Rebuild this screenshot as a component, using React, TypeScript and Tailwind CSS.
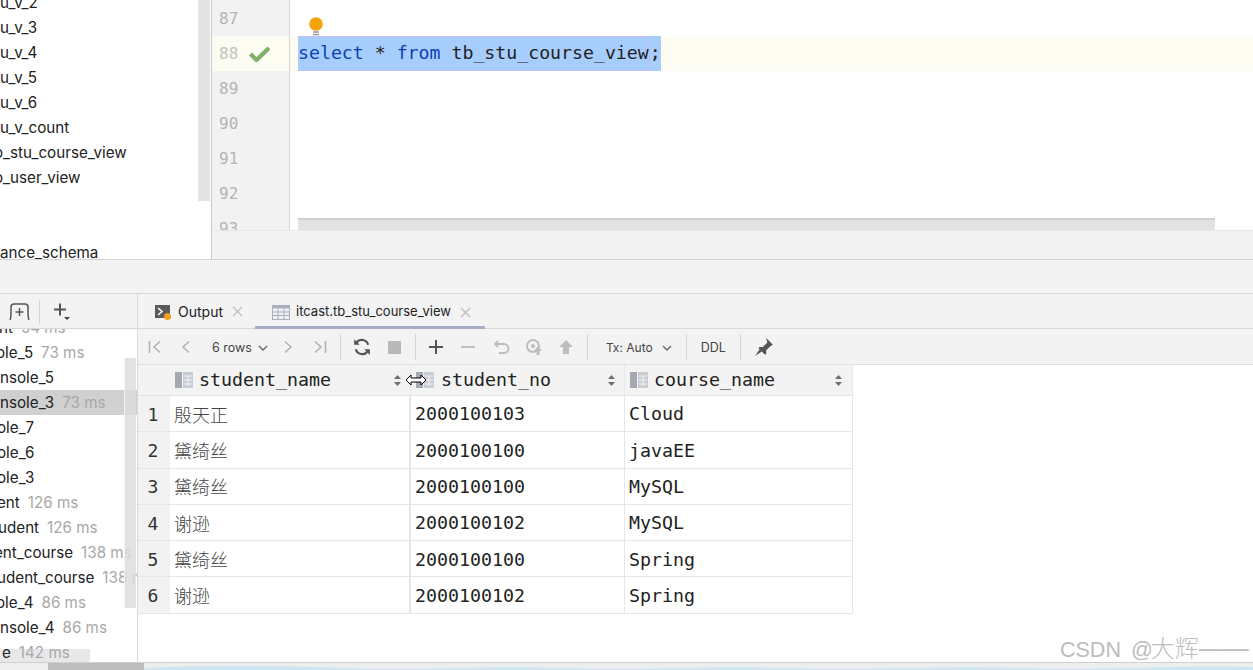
import React from "react";

const mono = "font-['DejaVu_Sans_Mono',monospace]";
const sans = "font-['Inter','Noto_Sans',sans-serif]";

const ColIcon = () => (
  <svg width="18" height="16" viewBox="0 0 18 16" className="shrink-0">
    <rect x="0" y="0" width="7" height="16" fill="#a4a8b0" />
    <rect x="8" y="0" width="10" height="16" fill="#c9ccd2" />
    <path d="M9 4h8M9 8h8M9 12h8M13 4v10" stroke="#f3f3f3" strokeWidth="1" />
  </svg>
);

const Sort = () => (
  <svg width="7" height="11" viewBox="0 0 7 11" className="shrink-0">
    <path d="M3.5 0L7 4H0zM3.5 11L0 7h7z" fill="#6e6e6e" />
  </svg>
);

const gutter = [
  { n: 87, h: "h-[36px] pt-[2px]" },
  { n: 88, h: "h-[35px]", active: true },
  { n: 89, h: "h-[35px]" },
  { n: 90, h: "h-[35px]" },
  { n: 91, h: "h-[35px]" },
  { n: 92, h: "h-[35px]" },
  { n: 93, h: "h-[35px]" },
];

const treeTop: [string, string][] = [
  ["u_v_2", ""],
  ["u_v_3", ""],
  ["u_v_4", ""],
  ["u_v_5", ""],
  ["u_v_6", ""],
  ["u_v_count", ""],
  ["o_stu_course_view", "-ml-[6px]"],
  ["o_user_view", "-ml-[6px]"],
  ["", ""],
  ["", ""],
  ["ance_schema", ""],
];

const services: [string, string, string, string][] = [
  ["nt", "54 ms", "-ml-[1px]", "w-[125px]"],
  ["ole_5", "73 ms", "-ml-[4px]", "w-[125px]"],
  ["nsole_5", "", "", "w-[125px]"],
  ["nsole_3", "73 ms", "", "w-[137px] bg-[#d0d0d0]"],
  ["ole_7", "", "-ml-[3px]", "w-[125px]"],
  ["ole_6", "", "-ml-[3px]", "w-[125px]"],
  ["ole_3", "", "-ml-[3px]", "w-[125px]"],
  ["ent", "126 ms", "-ml-[3px]", "w-[125px]"],
  ["udent", "126 ms", "-ml-[2px]", "w-[125px]"],
  ["ent_course", "138 ms", "-ml-[6px]", "w-[125px]"],
  ["udent_course", "138 ms", "-ml-[3px]", "w-[137px]"],
  ["ole_4", "86 ms", "-ml-[4px]", "w-[125px]"],
  ["nsole_4", "86 ms", "", "w-[125px]"],
  ["e", "142 ms", "ml-[2px]", "w-[90px] bg-[linear-gradient(to_bottom,transparent_9px,#e8e8e8_9px)]"],
];

const rows = [
  ["殷天正", "2000100103", "Cloud"],
  ["黛绮丝", "2000100100", "javaEE"],
  ["黛绮丝", "2000100100", "MySQL"],
  ["谢逊", "2000100102", "MySQL"],
  ["黛绮丝", "2000100100", "Spring"],
  ["谢逊", "2000100102", "Spring"],
];

const Sep = () => <div className="w-px h-[26px] bg-[#d4d4d4] shrink-0" />;

export default function App() {
  return (
    <div className={`relative w-[1253px] h-[670px] overflow-hidden flex flex-col bg-white ${sans} text-[#222]`}>
      {/* top pane */}
      <div className="h-[260px] shrink-0 flex border-b border-[#d4d4d4]">
        <div className="w-[211px] shrink-0 flex overflow-hidden">
          <div className="flex-1 -mt-[10px] text-[15.2px] leading-[25px] whitespace-nowrap overflow-hidden">
            {treeTop.map(([t, m], i) => (
              <div key={i} className={`h-[25px] ${m}`}>{t}</div>
            ))}
          </div>
          <div className="w-[12px] h-[201px] bg-[#e4e4e4] mr-px shrink-0" />
        </div>
        <div className="w-px bg-[#c8c8c8] shrink-0" />
        <div className="flex-1 flex flex-col min-w-0">
          <div className="flex-1 flex min-h-0 overflow-hidden relative">
            <div className="w-[78px] shrink-0 bg-[#f2f2f3] border-r border-[#d6d6d6] overflow-hidden">
              {gutter.map((g) => (
                <div key={g.n} className={`${g.h} flex items-center pl-[7px] gap-[11px] ${g.active ? "bg-[#fdfcf3] text-[#c4c4bc]" : "text-[#b4b4b4]"} ${mono} text-[16px]`}>
                  <span>{g.n}</span>
                  {g.active && (
                    <svg width="21" height="16" viewBox="0 0 21 16">
                      <path d="M1.5 8l6 6L20 2" fill="none" stroke="#7fb069" strokeWidth="4.2" />
                    </svg>
                  )}
                </div>
              ))}
            </div>
            <div className="flex-1 min-w-0 flex flex-col">
              <div className="h-[36px] shrink-0 pl-[17px] flex items-end">
                <svg width="18" height="20" viewBox="0 0 18 20">
                  <circle cx="9" cy="8" r="6.8" fill="#f5a30a" />
                  <path d="M6 16h6M6 18.5h6" stroke="#9a9a9a" strokeWidth="1.4" />
                </svg>
              </div>
              <div className="h-[35px] shrink-0 bg-[#fdfcf3] pl-[8px]">
                <div className={`inline-block h-[35px] leading-[32px] bg-[#a6cdfb] ${mono} text-[18.22px] whitespace-nowrap`}>
                  <span className="inline-block h-[35px] border border-[#c6bdf2] border-l-0 box-border">
                    <span className="text-[#0a3fb8]">select</span>
                    <span> * </span>
                    <span className="text-[#0a3fb8]">from</span>
                    <span> tb_stu_course_view</span>
                  </span>
                  <span>;</span>
                </div>
              </div>
              <div className="flex-1" />
              <div className="h-[12px] shrink-0 ml-[8px] mr-[38px] bg-[#e2e2e2] border-t-2 border-[#d0d0d0]" />
            </div>
          </div>
          <div className="h-[29px] shrink-0 bg-[#f2f2f2] border-t border-[#e8e8e8]" />
        </div>
      </div>
      {/* band */}
      <div className="h-[33px] shrink-0 bg-[#f3f3f3]" />
      {/* bottom pane */}
      <div className="flex-1 min-h-0 flex border-t border-[#d8d8d8]">
        {/* left services */}
        <div className="w-[138px] shrink-0 flex flex-col border-r border-[#d8d8d8] overflow-hidden">
          <div className="h-[35px] shrink-0 bg-[#f3f3f3] border-b border-[#d8d8d8] flex items-center pl-[9px] pt-[2px]">
            <svg width="21" height="18" viewBox="0 0 21 18" className="shrink-0">
              <path d="M1 17c1-2 1-3 1-8V4c0-2 1-3 3-3h11c2 0 3 1 3 3v5c0 5 0 6 1 8M10.5 5v8M6.5 9h8" fill="none" stroke="#555" strokeWidth="1.5" />
            </svg>
            <div className="w-px h-[24px] bg-[#d4d4d4] ml-[9px]" />
            <svg width="18" height="18" viewBox="0 0 18 18" className="ml-[13px] shrink-0">
              <path d="M1 6.5h12M7 0.5v12" stroke="#555" strokeWidth="2" />
              <path d="M11 14h6l-3 3z" fill="#444" />
            </svg>
          </div>
          <div className="flex-1 min-h-0 overflow-hidden relative">
            <div className="-mt-[14px] text-[15.2px] whitespace-nowrap">
              {services.map(([a, b, m, w], i) => (
                <div key={i} className={`h-[25px] leading-[25px] ${w}`}>
                  <div className={m}>
                    {a}
                    {b && <span className="text-[#a8a8a8] ml-[8px]">{b}</span>}
                  </div>
                </div>
              ))}
            </div>
            <div className="absolute right-[1px] top-[29px] w-[12px] h-[250px] bg-[#dcdcdc]/80 border-l border-[#f4f4f4]" />
          </div>
        </div>
        {/* right */}
        <div className="flex-1 min-w-0 flex flex-col">
          <div className="h-[35px] shrink-0 bg-[#f3f3f3] border-b border-[#d8d8d8] flex text-[13px]">
            <div className="w-[117px] shrink-0 flex items-center pl-[17px] gap-[7px] pt-[1px]">
              <svg width="16" height="16" viewBox="0 0 16 16" className="shrink-0">
                <rect x="0" y="1" width="15" height="13" fill="#5a5a5a" />
                <path d="M3 4l4 3.5L3 11" fill="none" stroke="#fff" strokeWidth="1.6" />
                <circle cx="12.5" cy="12.5" r="3.5" fill="#f0a020" />
              </svg>
              <span className="text-[14px]">Output</span>
              <svg width="11" height="11" viewBox="0 0 11 11" className="ml-[2px]">
                <path d="M1 1l9 9M10 1l-9 9" stroke="#bdbdbd" strokeWidth="1.2" />
              </svg>
            </div>
            <div className="w-[230px] shrink-0 flex items-center pl-[17px] gap-[6px] border-b-[3px] border-[#a8adc4] -mb-px pt-[4px]">
              <svg width="18" height="15" viewBox="0 0 18 15" className="shrink-0">
                <rect x="0.5" y="0.5" width="17" height="14" fill="#f0f1f4" stroke="#a9afbd" />
                <rect x="0.5" y="0.5" width="17" height="3" fill="#a9afbd" />
                <path d="M1 7h16M1 10.5h16M6 4v10M12 4v10" stroke="#a9afbd" />
              </svg>
              <span className="whitespace-nowrap">itcast.tb_stu_course_view</span>
              <svg width="11" height="11" viewBox="0 0 11 11" className="ml-[3px] shrink-0">
                <path d="M1 1l9 9M10 1l-9 9" stroke="#bdbdbd" strokeWidth="1.2" />
              </svg>
            </div>
          </div>
          <div className="h-[36px] shrink-0 bg-[#f3f3f3] border-b border-[#dedede] flex items-center text-[12px] text-[#444] pl-[10px] pt-[1px]">
            <svg width="14" height="14" viewBox="0 0 14 14" className="shrink-0"><path d="M1.5 1v12M12 1.5L6 7l6 5.5" fill="none" stroke="#b0b0b0" strokeWidth="1.5" /></svg>
            <svg width="10" height="14" viewBox="0 0 10 14" className="ml-[19px] shrink-0"><path d="M8 1.5L2 7l6 5.5" fill="none" stroke="#b0b0b0" strokeWidth="1.5" /></svg>
            <span className="ml-[21px] mt-[2px] whitespace-nowrap text-[12.5px]">6 rows</span>
            <svg width="10" height="6" viewBox="0 0 10 6" className="ml-[6px] mt-[2px] shrink-0"><path d="M1 1l4 4 4-4" fill="none" stroke="#666" strokeWidth="1.4" /></svg>
            <svg width="10" height="14" viewBox="0 0 10 14" className="ml-[15px] shrink-0"><path d="M2 1.5L8 7l-6 5.5" fill="none" stroke="#b0b0b0" strokeWidth="1.5" /></svg>
            <svg width="14" height="14" viewBox="0 0 14 14" className="ml-[20px] shrink-0"><path d="M12.5 1v12M2 1.5L8 7l-6 5.5" fill="none" stroke="#b0b0b0" strokeWidth="1.5" /></svg>
            <div className="ml-[13px]"><Sep /></div>
            <svg width="18" height="18" viewBox="0 0 16 16" className="ml-[12px] shrink-0"><path d="M13.5 6A6 6 0 0 0 3 4M2.5 10A6 6 0 0 0 13 12" fill="none" stroke="#555" strokeWidth="2" /><path d="M1 1v5h5zM15 15v-5h-5z" fill="#555" /></svg>
            <div className="w-[13px] h-[13px] bg-[#b8b8b8] ml-[17px] shrink-0" />
            <div className="ml-[14px]"><Sep /></div>
            <svg width="14" height="14" viewBox="0 0 14 14" className="ml-[13px] shrink-0"><path d="M0 7h14M7 0v14" stroke="#555" strokeWidth="2" /></svg>
            <svg width="14" height="14" viewBox="0 0 14 14" className="ml-[18px] shrink-0"><path d="M0 7h14" stroke="#c0c0c0" strokeWidth="2" /></svg>
            <svg width="16" height="16" viewBox="0 0 16 16" className="ml-[19px] shrink-0"><path d="M4 2L1 5l3 3M1 5h9a4.5 4.5 0 0 1 0 9H5" fill="none" stroke="#bdbdbd" strokeWidth="1.8" /></svg>
            <svg width="18" height="16" viewBox="0 0 18 16" className="ml-[15px] shrink-0"><circle cx="8" cy="7" r="6" fill="none" stroke="#bdbdbd" strokeWidth="2" /><circle cx="8" cy="7" r="2" fill="#bdbdbd" /><path d="M13 7l4 5h-2.5v4h-3v-4H9z" fill="#bdbdbd" /></svg>
            <svg width="16" height="16" viewBox="0 0 16 16" className="ml-[15px] shrink-0"><path d="M8 1l7 7h-4v7H5V8H1z" fill="#bdbdbd" /></svg>
            <div className="ml-[13px]"><Sep /></div>
            <span className="ml-[18px] mt-[2px] whitespace-nowrap">Tx: Auto</span>
            <svg width="10" height="6" viewBox="0 0 10 6" className="ml-[9px] mt-[2px] shrink-0"><path d="M1 1l4 4 4-4" fill="none" stroke="#666" strokeWidth="1.4" /></svg>
            <div className="ml-[14px]"><Sep /></div>
            <span className="ml-[14px] mt-[2px] text-[12.5px]">DDL</span>
            <div className="ml-[14px]"><Sep /></div>
            <svg width="20" height="20" viewBox="0 0 18 18" className="ml-[13px] shrink-0"><path d="M11 1l6 6-2 1-4 4 0 3-1 1-6-6 1-1 3 0 4-4zM5 11l-4 6 6-4z" fill="#555" /></svg>
          </div>
          <div className="flex-1 min-h-0 bg-white">
            <div className={`w-[715px] ${mono} text-[18.3px]`}>
              <div className="flex h-[31px] bg-[#f3f3f3] border-b border-[#e4e4e4]">
                <div className="w-[32px] shrink-0" />
                <div className="w-[241px] shrink-0 flex items-center pl-[5px] border-r border-[#e8e8e8]">
                  <ColIcon />
                  <span className="ml-[6px] flex-1">student_name</span>
                  <span className="mr-[9px] flex"><Sort /></span>
                </div>
                <div className="w-[214px] shrink-0 flex items-center pl-[5px] border-r border-[#e8e8e8]">
                  <ColIcon />
                  <span className="ml-[7px] flex-1">student_no</span>
                  <span className="mr-[9px] flex"><Sort /></span>
                </div>
                <div className="w-[228px] shrink-0 flex items-center pl-[5px] border-r border-[#e8e8e8]">
                  <ColIcon />
                  <span className="ml-[6px] flex-1">course_name</span>
                  <span className="mr-[10px] flex"><Sort /></span>
                </div>
              </div>
              {rows.map((r, i) => (
                <div key={i} className="flex h-[36.3px] border-b border-[#e6e6e6] box-border">
                  <div className={`w-[32px] shrink-0 bg-[#f2f2f2] flex items-center justify-center pr-[2px] pt-[1px] ${mono} text-[18px] text-[#333]`}>{i + 1}</div>
                  <div className="w-[241px] shrink-0 flex items-center pl-[4px] pt-[1px] border-r-2 border-[#e6e6e6] font-['Noto_Sans_CJK_SC',sans-serif] text-[18px] font-light text-[#444]">{r[0]}</div>
                  <div className="w-[214px] shrink-0 flex items-center pl-[4px] pt-[1px] border-r border-[#e6e6e6]">{r[1]}</div>
                  <div className="w-[228px] shrink-0 flex items-center pl-[4px] pt-[1px] border-r border-[#e6e6e6]">{r[2]}</div>
                </div>
              ))}
            </div>
          </div>
        </div>
      </div>
      {/* bottom strip */}
      <div className="h-[8px] shrink-0 bg-[#eeeeee] border-t border-[#d0d0d0] flex">
        <div className="w-[48px] shrink-0" />
        <div className="w-[96px] shrink-0 bg-[#bdbdbd]" />
        <svg width="1109" height="7" viewBox="0 0 1109 7" className="shrink-0">
          <path d="M0 7V5C60 2 120 2 200 5S340 2 420 5S560 2 640 5S800 2 880 5S1020 2 1109 4V7z" fill="#cfe6f0" />
        </svg>
      </div>
      <div className="absolute left-[1060px] top-[632px] text-[21.5px] leading-[30px] text-[#bcbcbc] font-['Liberation_Sans','Noto_Sans_CJK_SC',sans-serif] whitespace-nowrap">
        CSDN<span className="ml-[4px]"> @</span><span className="text-[24px] font-['Noto_Sans_CJK_SC',sans-serif] font-light -ml-[2px]">大辉</span><span className="text-[25px] font-['Liberation_Sans',sans-serif]">——</span>
      </div>
      <svg width="22" height="14" viewBox="0 0 22 14" className="absolute left-[405px] top-[373px]">
        <path d="M1 7l5-5v3h10V2l5 5-5 5V9H6v3z" fill="#fff" stroke="#000" strokeWidth="1" />
      </svg>
    </div>
  );
}
